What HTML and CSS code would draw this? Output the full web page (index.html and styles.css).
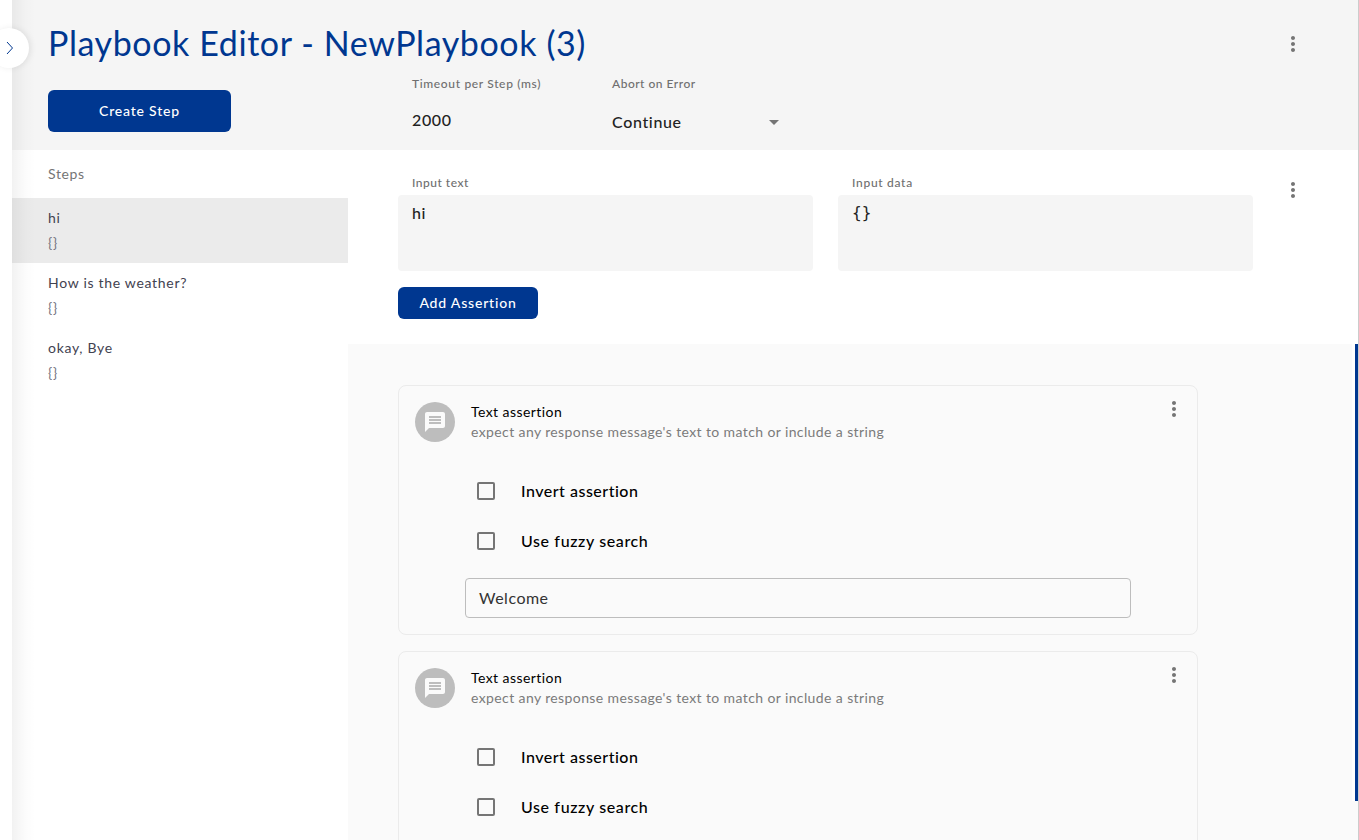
FILE: index.html
```html
<!DOCTYPE html>
<html lang="en">
<head>
<meta charset="utf-8">
<title>Playbook Editor</title>
<link rel="stylesheet" href="styles.css">
</head>
<body>
<svg width="0" height="0" class="defs">
  <symbol id="more" viewBox="0 0 24 24"><path d="M12 8c1.1 0 2-.9 2-2s-.9-2-2-2-2 .9-2 2 .9 2 2 2zm0 2c-1.1 0-2 .9-2 2s.9 2 2 2 2-.9 2-2-.9-2-2-2zm0 6c-1.1 0-2 .9-2 2s.9 2 2 2 2-.9 2-2-.9-2-2-2z"/></symbol>
  <symbol id="message" viewBox="0 0 24 24"><path d="M20 2H4c-1.1 0-1.99.9-1.99 2L2 22l4-4h14c1.1 0 2-.9 2-2V4c0-1.100-.9-2-2-2zm-2 12H6v-2h12v2zm0-3H6V9h12v2zm0-3H6V6h12v2z"/></symbol>
</svg>
<div class="app">
  <aside class="rail"><button class="toggle" aria-label="Expand"><svg width="8" height="14" viewBox="0 0 8 14"><path d="M1 1l5.500 6L1 13"/></svg></button></aside>
  <main class="editor">
    <header class="header">
      <div class="title-row">
        <h1>Playbook Editor - NewPlaybook (3)</h1>
        <svg class="more"><use href="#more"/></svg>
      </div>
      <div class="settings">
        <button class="btn create">Create Step</button>
        <div class="setting timeout"><span class="label l-timeout">Timeout per Step (ms)</span><span class="value">2000</span></div>
        <div class="setting abort"><span class="label l-abort">Abort on Error</span><span class="value select"><span>Continue</span><i class="caret"></i></span></div>
      </div>
    </header>
    <div class="body">
      <nav class="steps">
        <h2>Steps</h2>
        <div class="step active"><b>hi</b><small>{}</small></div>
        <div class="step"><b>How is the weather?</b><small>{}</small></div>
        <div class="step"><b>okay, Bye</b><small>{}</small></div>
      </nav>
      <section class="detail">
        <div class="inputs">
          <div class="field"><span class="label">Input text</span><div class="area">hi</div></div>
          <div class="field"><span class="label l-data">Input data</span><div class="area mono">{}</div></div>
          <svg class="more"><use href="#more"/></svg>
          <button class="btn add">Add Assertion</button>
        </div>
        <div class="assertions">
          <div class="list">
            <article class="card">
              <div class="card-head"><span class="avatar"><svg><use href="#message"/></svg></span>
                <div class="card-text"><h3>Text assertion</h3><p>expect any response message's text to match or include a string</p></div>
                <svg class="more"><use href="#more"/></svg></div>
              <div class="check"><i class="box"></i><span class="invert">Invert assertion</span></div>
              <div class="check"><i class="box"></i><span class="fuzzy">Use fuzzy search</span></div>
              <div class="text-input">Welcome</div>
            </article>
            <article class="card">
              <div class="card-head"><span class="avatar"><svg><use href="#message"/></svg></span>
                <div class="card-text"><h3>Text assertion</h3><p>expect any response message's text to match or include a string</p></div>
                <svg class="more"><use href="#more"/></svg></div>
              <div class="check"><i class="box"></i><span class="invert">Invert assertion</span></div>
              <div class="check"><i class="box"></i><span class="fuzzy">Use fuzzy search</span></div>
              <div class="text-input"></div>
            </article>
          </div>
          <div class="scroll"><div class="thumb"></div></div>
        </div>
      </section>
    </div>
  </main>
</div>
</body>
</html>
```
FILE: styles.css
```css
* { box-sizing: border-box; margin: 0; padding: 0; }
body { font-family: Lato, "Open Sans", sans-serif; height: 840px; overflow: hidden; background: #fff; color: #222; }
button { font-family: inherit; border: 0; }
.defs { display: block; position: absolute; }
.app { display: flex; height: 840px; position: relative; }
.rail { width: 12px; flex: none; position: relative; z-index: 2; background: #fff; }
.rail::after { content: ""; position: absolute; left: 12px; top: 0; width: 24px; height: 100%; background: linear-gradient(90deg, rgba(0,0,0,.05), rgba(0,0,0,.012) 60%, rgba(0,0,0,0)); }
.toggle { position: absolute; z-index: 1; left: -11px; top: 28px; width: 40px; height: 40px; border-radius: 50%; background: #fff; box-shadow: 2px 0 6px rgba(0,0,0,.08); }
.toggle svg { position: absolute; left: 17px; top: 13px; fill: none; stroke: #003790; stroke-width: 1; }
.editor { flex: 1; min-width: 0; border-right: 1px solid #ccc; display: flex; flex-direction: column; }
.header { height: 150px; flex: none; background: #f5f5f5; padding-left: 36px; }
.title-row { display: flex; justify-content: space-between; height: 76px; padding: 21px 53px 0 0; }
h1 { font-size: 34px; line-height: 44px; font-weight: 400; letter-spacing: .59px; color: #003790; white-space: nowrap; }
.more { width: 24px; height: 24px; fill: #757575; flex: none; }
.title-row .more { margin-top: 11px; }
.settings { display: flex; }
.btn { background: #003790; color: #fff; border-radius: 6px; font-size: 14px; font-weight: 500; letter-spacing: .8px; padding-bottom: 2px; }
.create { width: 183px; height: 42px; margin-top: 14px; }
.setting { display: flex; flex-direction: column; }
.timeout { margin-left: 181px; width: 200px; }
.abort { width: 167px; }
.label { font-size: 12px; line-height: 16px; letter-spacing: .5px; color: #6f6f6f; font-weight: 500; white-space: nowrap; }
.l-timeout { letter-spacing: .65px; }
.l-data { letter-spacing: .7px; }
.value { margin-top: 17px; font-size: 16px; line-height: 22px; letter-spacing: .65px; font-weight: 500; }
.select { margin-top: 19px; display: flex; justify-content: space-between; align-items: center; }
.caret { border: 5px solid transparent; border-top-color: #757575; border-bottom: 0; }
.body { flex: 1; display: flex; min-height: 0; }
.steps { width: 336px; flex: none; }
h2 { height: 48px; padding-left: 36px; font-size: 14px; line-height: 48px; font-weight: 400; letter-spacing: .6px; color: #757575; }
.step { height: 65px; padding: 10px 36px; display: flex; flex-direction: column; gap: 5px; }
.step b { font-size: 14px; line-height: 20px; font-weight: 400; letter-spacing: .7px; color: #424250; }
.step small { font-size: 14px; line-height: 20px; letter-spacing: .7px; color: #75757f; }
.active { background: #ebebeb; }
.detail { flex: 1; display: flex; flex-direction: column; min-width: 0; }
.inputs { height: 194px; flex: none; padding: 25px 53px 0 50px; display: grid; grid-template-columns: 415px 415px 24px; column-gap: 25px; grid-template-rows: 96px 32px; row-gap: 16px; justify-content: start; }
.field .label { display: block; padding-left: 14px; height: 20px; }
.area { height: 76px; border-radius: 4px; background: #f5f5f5; padding: 7px 14px; font-size: 16px; line-height: 22px; letter-spacing: .5px; font-weight: 500; }
.mono { font-family: "DejaVu Sans Mono", monospace; letter-spacing: 0; }
.inputs .more { margin: 3px 0 0 3px; }
.add { width: 140px; height: 32px; }
.assertions { flex: 1; min-height: 0; background: #fafafa; display: flex; justify-content: space-between; overflow: hidden; }
.list { padding: 41px 0 0 50px; display: flex; flex-direction: column; gap: 16px; }
.card { width: 800px; height: 250px; flex: none; border: 1px solid #ebebeb; border-radius: 8px; padding: 16px; }
.card-head { display: flex; gap: 16px; height: 64px; }
.avatar { width: 40px; height: 40px; border-radius: 50%; background: #bdbdbd; display: grid; place-items: center; }
.avatar svg { width: 24px; height: 24px; fill: #fafafa; }
.card-text { flex: 1; }
h3 { font-size: 14px; line-height: 20px; font-weight: 400; color: #000; letter-spacing: .43px; }
.card-text p { font-size: 14px; line-height: 20px; color: #7b7b7b; letter-spacing: .39px; }
.card-head .more { margin: -5px -5px 0 0; }
.check { height: 50px; display: flex; align-items: center; padding-left: 62px; gap: 26px; font-size: 16px; color: #000; letter-spacing: .5px; font-weight: 500; }
.check span { padding-bottom: 2px; }
.fuzzy { letter-spacing: .62px; }
.box { width: 18px; height: 18px; border: 2px solid #757575; border-radius: 2px; }
.text-input { margin: 12px 50px 0; height: 40px; border: 1px solid #bdbdbd; border-radius: 4px; padding: 0 13px; font-size: 16px; line-height: 37px; letter-spacing: .5px; color: #333; }
.scroll { width: 6px; height: 457px; background: #fff; display: flex; justify-content: flex-end; }
.thumb { width: 3px; height: 457px; background: #003790; }
```
